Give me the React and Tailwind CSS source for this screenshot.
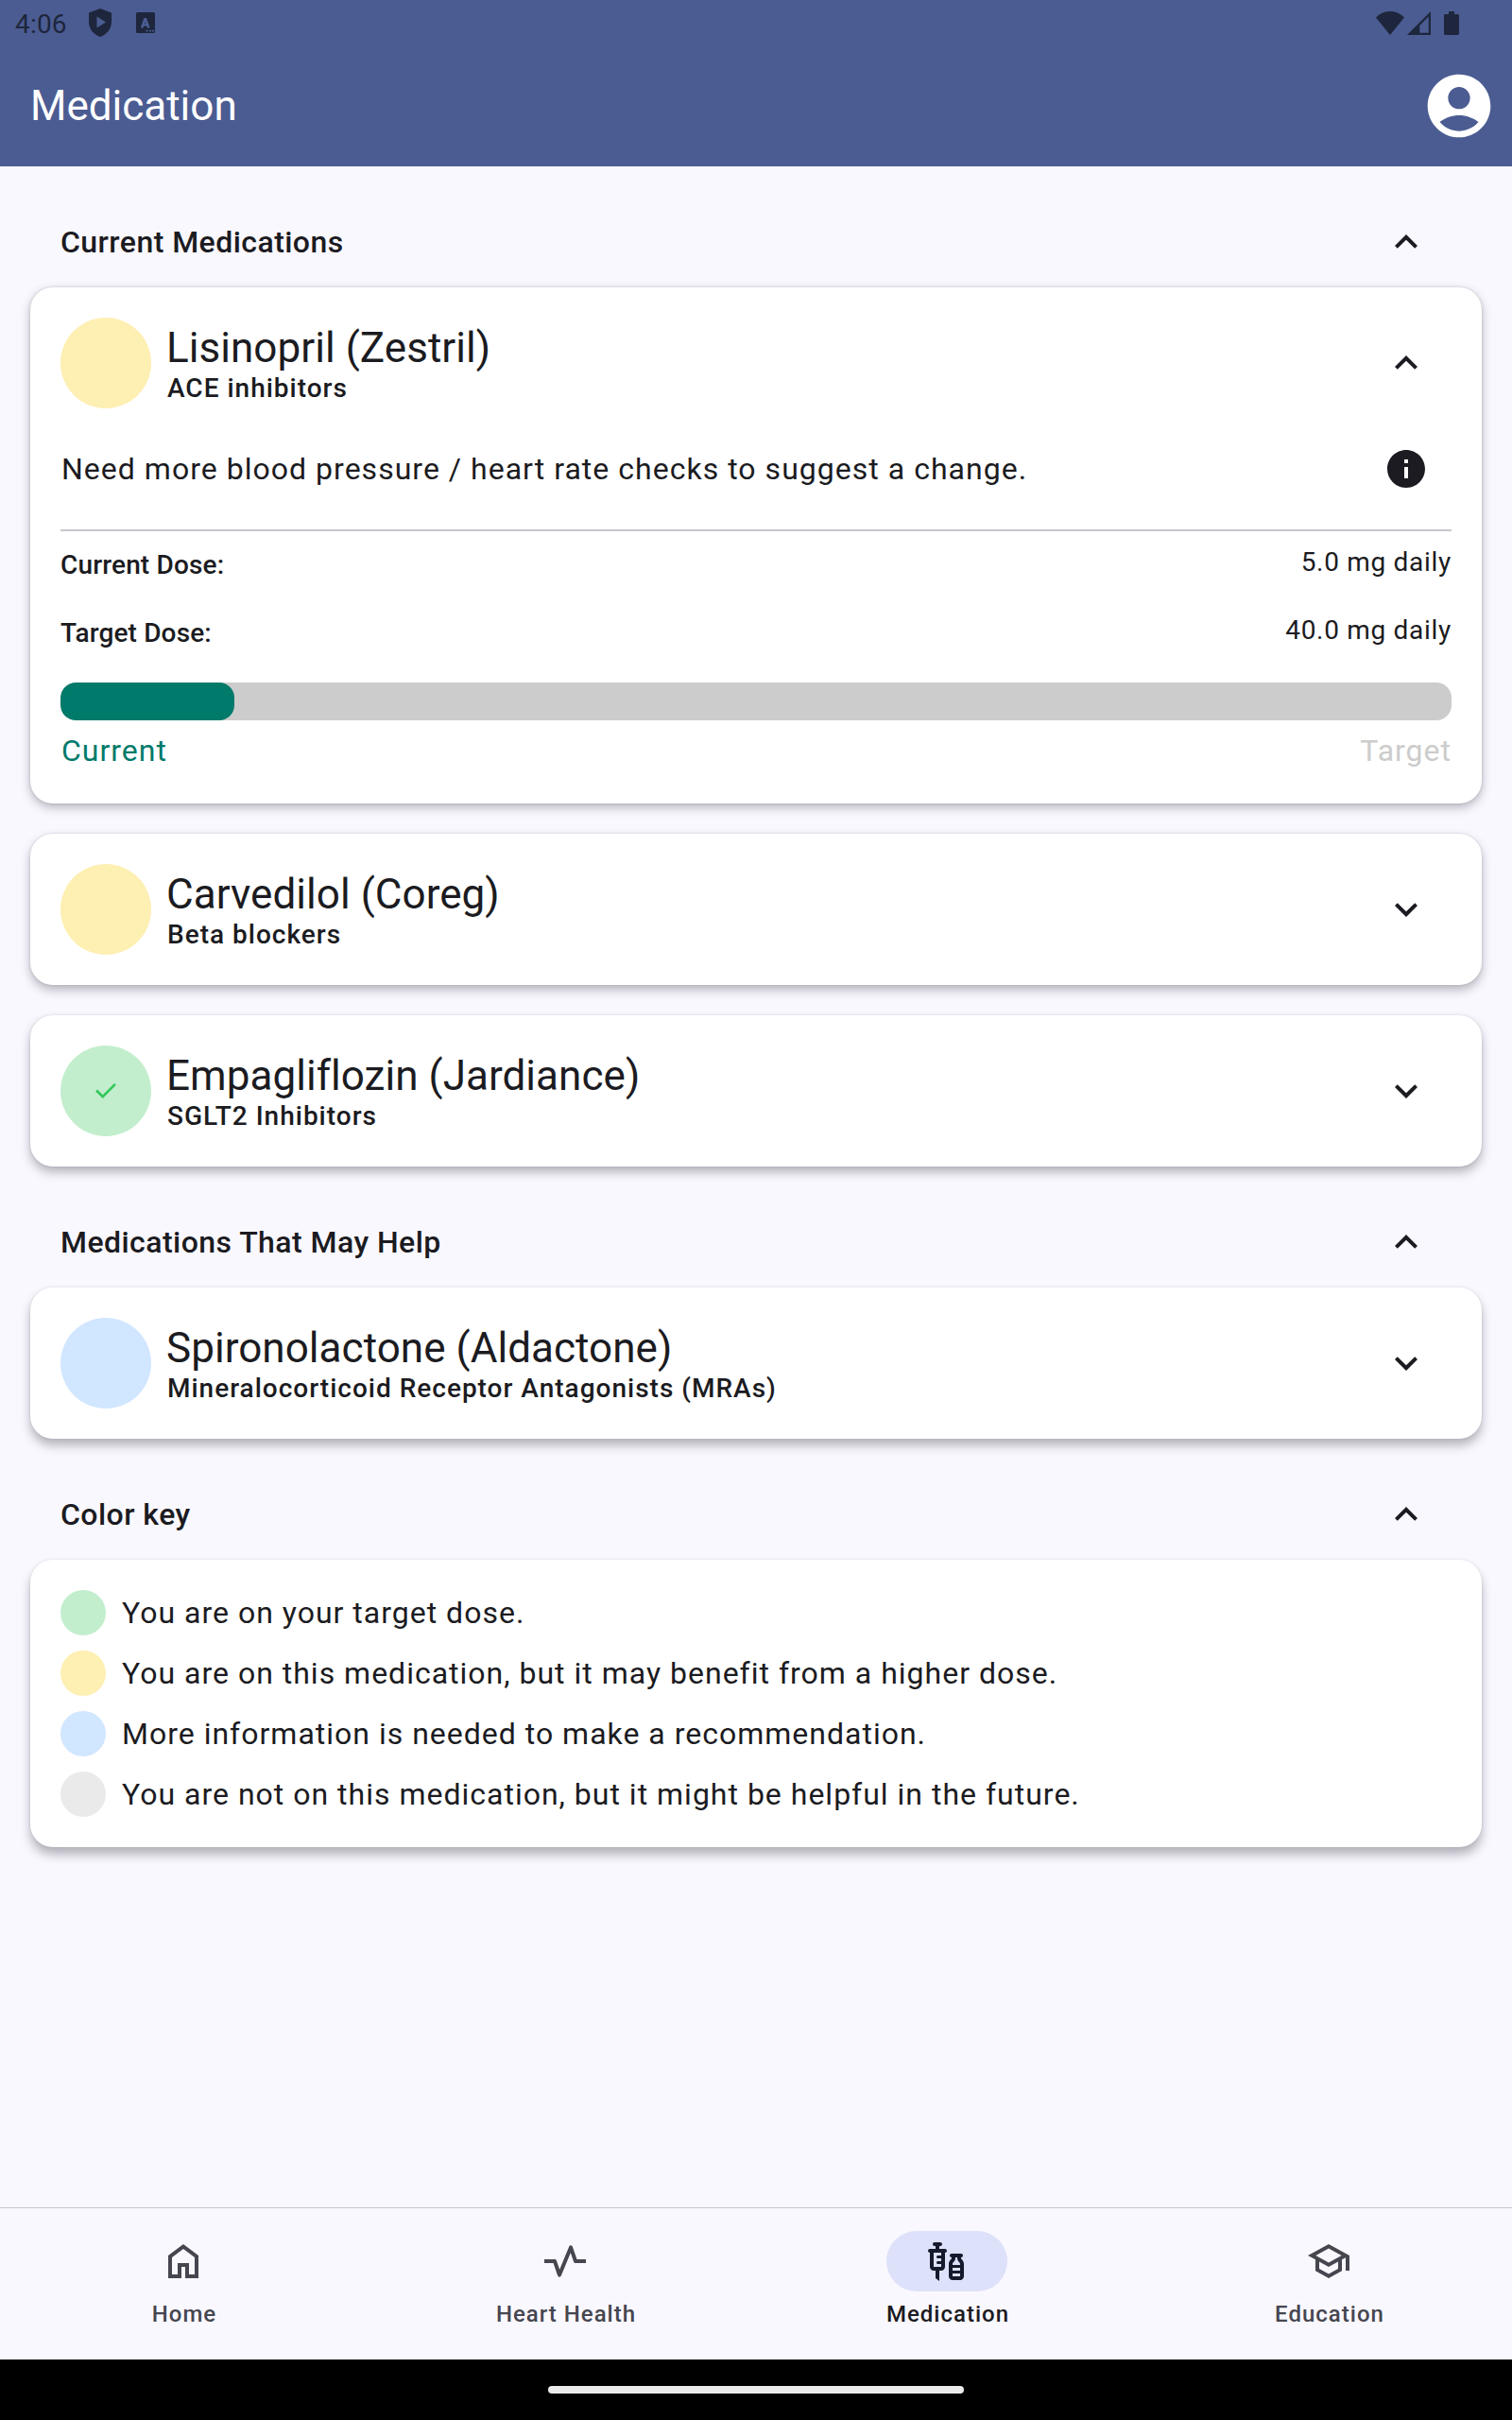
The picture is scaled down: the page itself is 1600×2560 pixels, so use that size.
import React from "react";
import { MdOutlineVaccines, MdOutlineSchool, MdInfo } from "react-icons/md";

const tones = {
  green: "bg-[#c2eecd]",
  yellow: "bg-[#feefb2]",
  blue: "bg-[#d1e6ff]",
  gray: "bg-[#eaeaea]",
};

function Chevron({ up }) {
  return (
    <svg viewBox="0 0 24 24" className="size-12 shrink-0 fill-[#1b1b21]">
      {up ? (
        <path d="M12 8l-6 6 1.41 1.41L12 10.83l4.59 4.58L18 14z" />
      ) : (
        <path d="M16.59 8.59L12 13.17 7.41 8.59 6 10l6 6 6-6z" />
      )}
    </svg>
  );
}

function StatusBar() {
  return (
    <div className="flex h-12 items-center justify-between pr-14 pl-4 text-[#1d263c]">
      <div className="flex items-center">
        <span className="w-[76px] pt-1 text-[28px] leading-none tracking-[0.2px]">4:06</span>
        <svg viewBox="0 0 24 30" className="ml-[2px] h-[30px] w-6 fill-current">
          <path
            fillRule="evenodd"
            d="M12 0 24 4.500V14c0 7.500-5 13.500-12 16C5 27.500 0 21.500 0 14V4.500zM8.500 8.500v12L18 14.500z"
          />
        </svg>
        <svg viewBox="0 0 20 22" className="ml-[26px] h-[22px] w-5">
          <rect width="20" height="22" rx="1.500" fill="currentColor" />
          <path d="M6 16.500 9.700 6.500l3.700 10M7.500 13.200h4.500" fill="none" stroke="#4b5c92" strokeWidth="2.600" strokeLinejoin="bevel" />
          <path d="M10.500 19.700h2M14 19.700h2M17 19.700h2" stroke="#4b5c92" strokeWidth="1.800" />
        </svg>
      </div>
      <div className="flex items-center">
        <svg viewBox="0 0 30 25" className="h-[25px] w-[30px] fill-current">
          <path d="M15 25 0 6.500C8.500-2.200 21.500-2.200 30 6.500z" />
        </svg>
        <svg viewBox="0 0 25 25" className="ml-[3px] h-[25px] w-[25px] fill-current">
          <path fillRule="evenodd" d="M25 0v25H0zM22.800 5.500 13.300 15v7.700h9.500z" />
        </svg>
        <svg viewBox="0 0 16 25" className="ml-3.5 h-[25px] w-4 fill-current">
          <path d="M5 0h6v3h4l1 1v20l-1 1H1l-1-1V4l1-1h4z" />
        </svg>
      </div>
    </div>
  );
}

function Header() {
  return (
    <header className="h-44 bg-[#4b5c92]">
      <StatusBar />
      <div className="flex h-32 items-center justify-between pr-4 pl-8">
        <h1 className="text-[44px] leading-[56px] text-white">Medication</h1>
        <svg viewBox="0 0 24 24" className="size-20 fill-white">
          <path d="M12 2C6.480 2 2 6.480 2 12s4.480 10 10 10 10-4.480 10-10S17.520 2 12 2zm0 4c1.930 0 3.500 1.570 3.500 3.500S13.930 13 12 13s-3.500-1.570-3.500-3.500S10.070 6 12 6zm0 14c-2.030 0-4.430-.820-6.140-2.880C7.550 15.800 9.680 15 12 15s4.450.800 6.140 2.120C16.430 19.180 14.030 20 12 20z" />
        </svg>
      </div>
    </header>
  );
}

function SectionTitle({ children }) {
  return (
    <div className="flex h-24 items-center justify-between pr-22 pl-16">
      <h2 className="text-[32px] leading-[48px] font-medium tracking-[0.45px]">{children}</h2>
      <Chevron up />
    </div>
  );
}

function Card({ shadow, className = "", children }) {
  return <section className={`mx-8 rounded-3xl bg-white p-8 ${shadow} ${className}`}>{children}</section>;
}

function MedHeader({ tone, name, kind, open, checked }) {
  return (
    <div className="flex h-24 items-center pr-6">
      <div className={`flex size-24 shrink-0 items-center justify-center rounded-full ${tones[tone]}`}>
        {checked && (
          <svg viewBox="0 0 24 24" className="size-8 fill-[#34c759]">
            <path d="M9.550 18l-5.700-5.700 1.425-1.425L9.550 15.150l9.175-9.175L20.150 7.400z" />
          </svg>
        )}
      </div>
      <div className="ml-4 flex-1 pt-2.5">
        <h3 className="text-[44px] leading-[43px] tracking-[0.050px]">{name}</h3>
        <p className="pl-px text-[28px] leading-[42px] font-medium tracking-[1px]">{kind}</p>
      </div>
      <Chevron up={open} />
    </div>
  );
}

function DoseRow({ label, value }) {
  return (
    <div className="flex h-10 justify-between">
      <span className="pt-1 text-[28px] leading-10 font-medium tracking-[0.15px]">{label}</span>
      <span className="pt-px text-[28px] leading-10 tracking-[0.7px]">{value}</span>
    </div>
  );
}

const legend = [
  ["green", "You are on your target dose."],
  ["yellow", "You are on this medication, but it may benefit from a higher dose."],
  ["blue", "More information is needed to make a recommendation."],
  ["gray", "You are not on this medication, but it might be helpful in the future."],
];

function NavItem({ label, active, children }) {
  return (
    <div className={`flex flex-1 flex-col items-center pt-6 ${active ? "text-[#1b1b21]" : "text-[#45464f]"}`}>
      <div
        className={`flex h-16 w-32 items-center justify-center rounded-full ${
          active ? "bg-[#dde1f9] text-[#151b2c]" : ""
        }`}
      >
        {children}
      </div>
      <span className="mt-2 pl-0.5 text-2xl leading-8 font-medium tracking-[1px]">{label}</span>
    </div>
  );
}

export default function App() {
  return (
    <div className="flex h-[2560px] w-[1600px] flex-col overflow-hidden bg-[#faf8ff] font-[Roboto,sans-serif] text-[#1b1b21]">
      <Header />
      <main className="flex-1 pt-8">
        <SectionTitle>Current Medications</SectionTitle>
        <Card shadow="shadow-[0_4px_11px_rgba(40,35,50,0.33),0_0_3px_rgba(40,35,50,0.15)]" className="h-[546px]">
          <MedHeader tone="yellow" name="Lisinopril (Zestril)" kind="ACE inhibitors" open />
          <div className="flex h-32 items-center justify-between pr-6 pl-px">
            <p className="text-[32px] leading-[48px] tracking-[1.020px]">
              Need more blood pressure / heart rate checks to suggest a change.
            </p>
            <MdInfo className="size-12" />
          </div>
          <div className="h-0.5 bg-[#c6c5d0]" />
          <div className="mt-3 flex flex-col gap-8">
            <DoseRow label="Current Dose:" value="5.0 mg daily" />
            <DoseRow label="Target Dose:" value="40.0 mg daily" />
          </div>
          <div className="mt-9 h-10 overflow-hidden rounded-2xl bg-[#cccccc]">
            <div className="h-full w-1/8 rounded-2xl bg-[#007a6a]" />
          </div>
          <div className="mt-2 flex justify-between pl-px text-[32px] leading-[48px] tracking-[1px]">
            <span className="text-[#007a6a]">Current</span>
            <span className="text-[#cccccc]">Target</span>
          </div>
        </Card>
        <Card shadow="shadow-[0_5px_11px_rgba(40,35,50,0.33),0_0_3px_rgba(40,35,50,0.12)]" className="mt-8 h-40">
          <MedHeader tone="yellow" name="Carvedilol (Coreg)" kind="Beta blockers" />
        </Card>
        <Card shadow="shadow-[0_6px_11px_rgba(40,35,50,0.33),0_0_3px_rgba(40,35,50,0.12)]" className="mt-8 h-40">
          <MedHeader tone="green" name="Empagliflozin (Jardiance)" kind="SGLT2 Inhibitors" checked />
        </Card>
        <div className="pt-8">
          <SectionTitle>Medications That May Help</SectionTitle>
        </div>
        <Card shadow="shadow-[0_7px_11px_rgba(40,35,50,0.33),0_0_3px_rgba(40,35,50,0.1)]" className="h-40">
          <MedHeader
            tone="blue"
            name="Spironolactone (Aldactone)"
            kind="Mineralocorticoid Receptor Antagonists (MRAs)"
          />
        </Card>
        <div className="pt-8">
          <SectionTitle>Color key</SectionTitle>
        </div>
        <Card shadow="shadow-[0_8px_11px_rgba(40,35,50,0.33),0_0_3px_rgba(40,35,50,0.1)]" className="flex flex-col gap-4">
          {legend.map(([tone, text]) => (
            <div key={tone} className="flex items-center gap-[17px]">
              <span className={`size-12 rounded-full ${tones[tone]}`} />
              <span className="text-[32px] leading-[48px] tracking-[1px]">{text}</span>
            </div>
          ))}
        </Card>
      </main>
      <nav className="flex h-[161px] gap-4 border-t border-[#c7c6cd]">
        <NavItem label="Home">
          <svg viewBox="0 0 24 24" className="size-12 fill-current">
            <path d="M6 19h3v-6h6v6h3v-9l-6-4.500L6 10v9zm-2 2V9l8-6 8 6v12h-7v-6h-2v6H4z" />
          </svg>
        </NavItem>
        <NavItem label="Heart Health">
          <svg viewBox="0 0 24 24" className="size-12 fill-none stroke-current" strokeWidth="2">
            <path d="M1 12h5.500L9 19.300 15 4.700 17.500 12H23" strokeLinejoin="round" />
          </svg>
        </NavItem>
        <NavItem label="Medication" active>
          <MdOutlineVaccines className="size-12" />
        </NavItem>
        <NavItem label="Education">
          <MdOutlineSchool className="size-12" />
        </NavItem>
      </nav>
      <footer className="flex h-16 items-center justify-center bg-black">
        <div className="h-2 w-[440px] rounded-full bg-[#ebebeb]" />
      </footer>
    </div>
  );
}
